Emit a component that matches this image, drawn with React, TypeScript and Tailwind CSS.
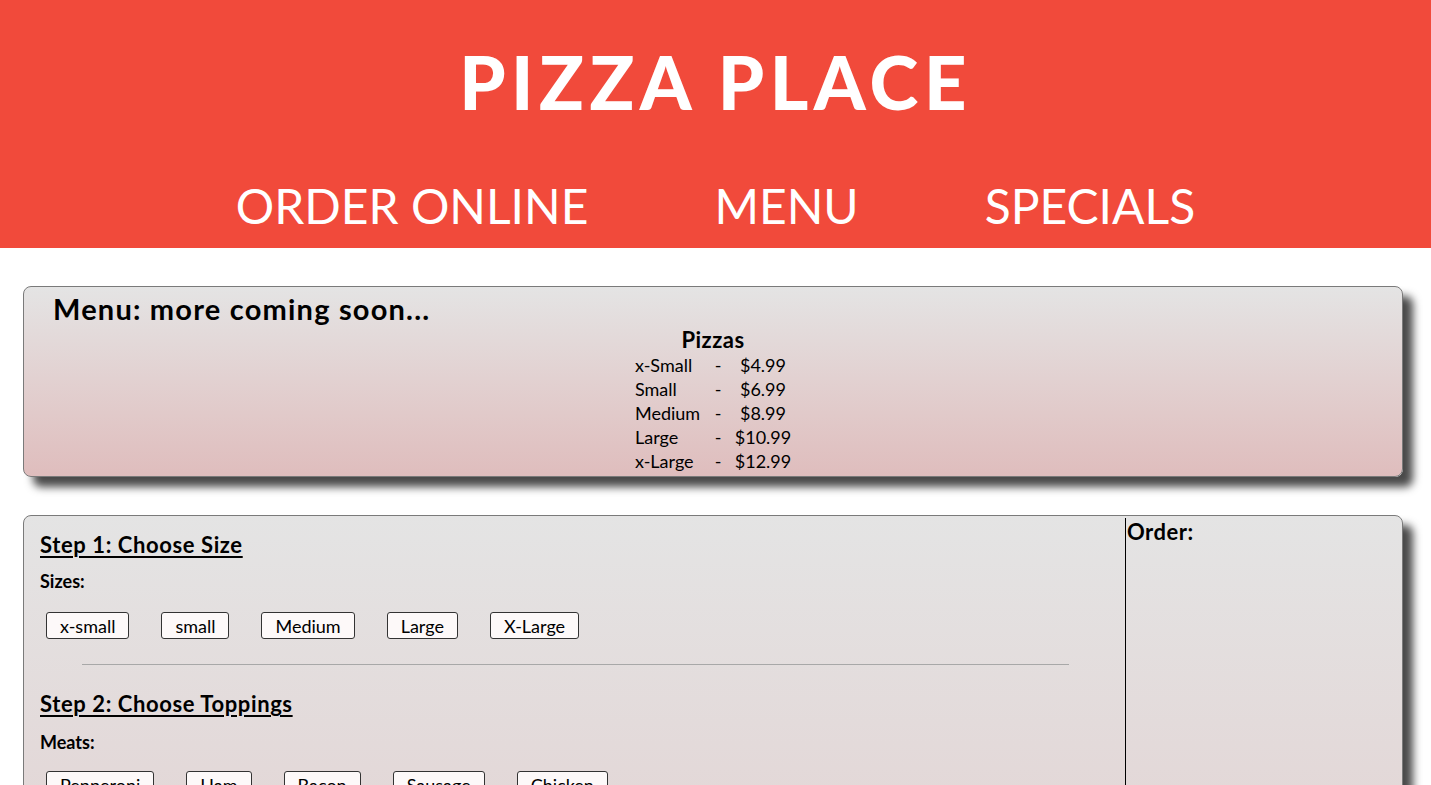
import React from "react";

const sizes = ["x-small", "small", "Medium", "Large", "X-Large"];
const meats = ["Pepperoni", "Ham", "Bacon", "Sausage", "Chicken"];
const prices: [string, string][] = [
  ["x-Small", "$4.99"],
  ["Small", "$6.99"],
  ["Medium", "$8.99"],
  ["Large", "$10.99"],
  ["x-Large", "$12.99"],
];

function PickButton({ label }: { label: string }) {
  return (
    <button className="h-[27px] rounded-[3px] border border-[#333] bg-[#fdf9f9] px-[13px] text-[18px] leading-none text-black">
      {label}
    </button>
  );
}

function Card({ children, className = "" }: { children: React.ReactNode; className?: string }) {
  return (
    <div
      className={
        "rounded-lg border border-[#7a7a7a] bg-gradient-to-b from-[#e4e4e4] to-[#dfbdbd] shadow-[10px_10px_8px_#4a4a4a] " +
        className
      }
    >
      {children}
    </div>
  );
}

export default function App() {
  return (
    <div className="min-h-screen bg-white font-['Lato',sans-serif] text-black">
      <header className="flex h-[248px] flex-col items-center bg-[#f14a3b] text-white">
        <h1 className="mt-[38px] text-[74px] font-black leading-[88px] tracking-[5.5px]">PIZZA PLACE</h1>
        <nav className="mt-[52px] flex gap-[126px] text-[48px] leading-[56px]">
          <a>ORDER ONLINE</a>
          <a>MENU</a>
          <a>SPECIALS</a>
        </nav>
      </header>

      <main className="flex flex-col gap-[38px] pl-[23px] pr-[28px] pt-[38px]">
        <Card className="h-[191px] pt-[4px]">
          <h2 className="pl-[29px] text-[29px] font-bold leading-[36px] tracking-[1.2px]">
            Menu: more coming soon...
          </h2>
          <div className="flex flex-col items-center">
            <h3 className="text-[22px] font-bold leading-[26px] tracking-[0.5px]">Pizzas</h3>
            <div className="grid grid-cols-[70px_30px_60px] text-[18px] leading-[24px]">
              {prices.map(([name, price]) => (
                <React.Fragment key={name}>
                  <span className="pl-[2px]">{name}</span>
                  <span className="text-center">-</span>
                  <span className="text-center">{price}</span>
                </React.Fragment>
              ))}
            </div>
          </div>
        </Card>

        <Card className="flex h-[900px] pt-[2px]">
          <section className="w-[1101px] pl-[16px] pt-[13px]">
            <h3 className="text-[22px] font-bold leading-[28px] tracking-[0.6px] underline decoration-2 underline-offset-[3px]">
              Step 1: Choose Size
            </h3>
            <p className="mt-[10px] text-[18px] font-bold leading-[24px]">Sizes:</p>
            <div className="mt-[19px] flex gap-[32px] pl-[6px]">
              {sizes.map((s) => (
                <PickButton key={s} label={s} />
              ))}
            </div>
            <hr className="ml-[42px] mr-[56px] mt-[25px] border-t border-[#a8a8a8]" />
            <h3 className="mt-[25px] text-[22px] font-bold leading-[28px] tracking-[0.6px] underline decoration-2 underline-offset-[3px]">
              Step 2: Choose Toppings
            </h3>
            <p className="mt-[12px] text-[18px] font-bold leading-[24px]">Meats:</p>
            <div className="mt-[17px] flex gap-[32px] pl-[6px]">
              {meats.map((s) => (
                <PickButton key={s} label={s} />
              ))}
            </div>
          </section>
          <aside className="flex-1 border-l border-black pl-[1px]">
            <h3 className="text-[22px] font-bold leading-[28px] tracking-[0.5px]">Order:</h3>
          </aside>
        </Card>
      </main>
    </div>
  );
}
